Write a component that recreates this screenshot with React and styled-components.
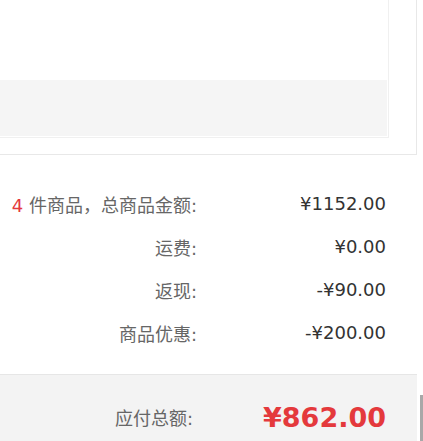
import styled, { createGlobalStyle } from "styled-components";

const GlobalStyle = createGlobalStyle`
  html, body {
    margin: 0;
    padding: 0;
    background: #fff;
    overflow: hidden;
  }
  body {
    font-family: "DejaVu Sans", "Noto Sans CJK SC", sans-serif;
  }
`;

const summary = [
  { label: "件商品，总商品金额:", count: 4, value: "¥1152.00" },
  { label: "运费:", value: "¥0.00" },
  { label: "返现:", value: "-¥90.00" },
  { label: "商品优惠:", value: "-¥200.00" },
];

export default function App() {
  return (
    <Page>
      <GlobalStyle />
      <OrderBox>
        <InnerBox>
          <InnerBlank />
          <InnerGrey />
        </InnerBox>
      </OrderBox>
      <Summary>
        {summary.map((row) => (
          <Row key={row.label}>
            <Label>
              {row.count && <Count>{row.count} </Count>}
              {row.label}
            </Label>
            <Value>{row.value}</Value>
          </Row>
        ))}
      </Summary>
      <TotalBar>
        <Row $height={84}>
          <Label $pad={4}>应付总额:</Label>
          <TotalValue>¥862.00</TotalValue>
        </Row>
      </TotalBar>
      <ScrollThumb />
    </Page>
  );
}

const Page = styled.div`
  position: relative;
  width: 423px;
  height: 441px;
  overflow: hidden;
`;

const OrderBox = styled.div`
  width: 416px;
  height: 154px;
  border-right: 1px solid #e8e8e8;
  border-bottom: 1px solid #e8e8e8;
`;

const InnerBox = styled.div`
  width: 387px;
  height: 136px;
  border-right: 1px solid #f0f0f0;
  border-bottom: 1px solid #f0f0f0;
  padding: 0 1px 1px 0;
  display: flex;
  flex-direction: column;
`;

const InnerBlank = styled.div`
  height: 80px;
`;

const InnerGrey = styled.div`
  flex: 1;
  background: #f5f5f5;
`;

const Summary = styled.div`
  width: 417px;
  padding: 27px 0 20px;
`;

const Row = styled.div`
  display: flex;
  align-items: center;
  height: ${(p) => p.$height || 43}px;
  padding-right: 31px;
  font-size: 18px;
`;

const Label = styled.div`
  flex: 1;
  text-align: right;
  color: #666;
  padding-right: ${(p) => p.$pad || 0}px;
  white-space: nowrap;
`;

const Count = styled.span`
  color: #e4393c;
`;

const Value = styled.div`
  width: 189px;
  text-align: right;
  color: #333;
`;

const TotalBar = styled.div`
  width: 417px;
  border-top: 1px solid #e6e6e6;
  background: #f3f3f3;
  height: 80px;
`;

const TotalValue = styled(Value)`
  color: #e4393c;
  font-weight: bold;
  font-size: 27px;
`;

const ScrollThumb = styled.div`
  position: absolute;
  left: 420px;
  top: 395px;
  width: 3px;
  height: 46px;
  background: #a8a8a8;
`;
